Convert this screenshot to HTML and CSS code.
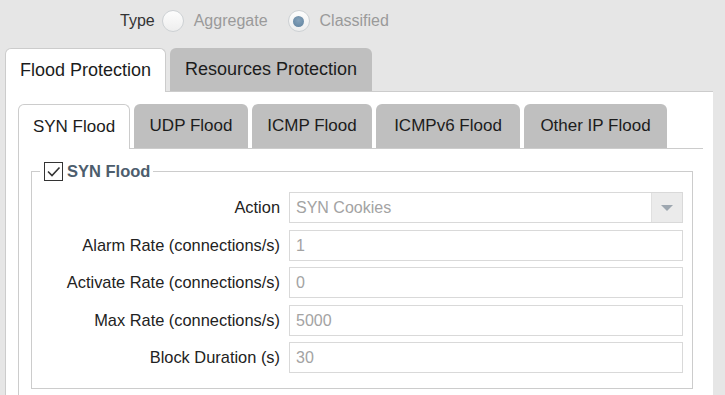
FILE: index.html
```html
<!DOCTYPE html>
<html lang="en">
<head>
    <meta charset="UTF-8">
    <title>Flood Protection</title>
    <link rel="stylesheet" href="styles.css">
</head>
<body>
    <div class="type-row">
        <span class="type-label">Type</span>
        <span class="radio"></span>
        <span class="radio-text">Aggregate</span>
        <span class="radio checked"></span>
        <span class="radio-text">Classified</span>
    </div>

    <div class="outer-tabs">
        <div class="otab otab-flood active">Flood Protection</div>
        <div class="otab otab-res">Resources Protection</div>
    </div>
    <div class="outer-panel">
        <div class="inner-tabs">
            <div class="itab itab-syn active">SYN Flood</div>
            <div class="itab itab-udp">UDP Flood</div>
            <div class="itab itab-icmp">ICMP Flood</div>
            <div class="itab itab-icmp6">ICMPv6 Flood</div>
            <div class="itab itab-other">Other IP Flood</div>
        </div>
        <div class="inner-panel">
            <fieldset class="group">
                <legend>
                    <span class="check">
                        <svg width="15" height="15" viewBox="0 0 15 15"><path d="M2 7.5 L6 11.5 L13.5 3.5" fill="none" stroke="#333" stroke-width="1.6"/></svg>
                    </span>
                    <span class="legend-text">SYN Flood</span>
                </legend>
                <div class="form">
                    <label>Action</label>
                    <div class="select">
                        <span class="value">SYN Cookies</span>
                        <span class="arrow"></span>
                    </div>
                    <label>Alarm Rate (connections/s)</label>
                    <div class="input">1</div>
                    <label>Activate Rate (connections/s)</label>
                    <div class="input">0</div>
                    <label>Max Rate (connections/s)</label>
                    <div class="input">5000</div>
                    <label>Block Duration (s)</label>
                    <div class="input">30</div>
                </div>
            </fieldset>
        </div>
    </div>
</body>
</html>
```

FILE: styles.css
```css
body{
    margin: 0;
    background: #e6e6e6;
    font-family: "Liberation Sans", Arial, sans-serif;
    color: #222;
    overflow: hidden;
}
.type-row{
    display: flex;
    align-items: center;
    height: 42px;
    padding-left: 120px;
    font-size: 16px;
}
.type-label{
    margin-right: 7px;
    color: #333;
}
.radio{
    width: 20px;
    height: 20px;
    border: 1px solid #cdd1d4;
    border-radius: 50%;
    background: linear-gradient(#fdfdfd, #eeeeee);
    margin-right: 10px;
    display: flex;
    align-items: center;
    justify-content: center;
}
.radio.checked:after{
    content: "";
    width: 11px;
    height: 11px;
    border-radius: 50%;
    background: radial-gradient(circle at 50% 40%, #86a3bb, #5f819e);
}
.radio-text{
    color: #9a9a9a;
    margin-right: 20px;
}
.outer-tabs{
    display: flex;
    gap: 4px;
    margin: 6px 0 0 5px;
}
.otab{
    height: 43px;
    line-height: 43px;
    text-align: center;
    font-size: 18px;
    color: #1c1c1c;
    background: #bfbfbf;
    border-radius: 6px 6px 0 0;
    box-sizing: border-box;
}
.otab-flood{ width: 161px; }
.otab-res{ width: 202px; }
.otab.active{
    background: #fff;
    border: 1px solid #cccccc;
    border-bottom: none;
    height: 44px;
    margin-bottom: -1px;
    position: relative;
}
.outer-panel{
    margin-left: 5px;
    width: 708px;
    box-sizing: border-box;
    height: 304px;
    background: #fff;
    border-left: 1px solid #cccccc;
    border-top: 1px solid #cccccc;
    padding: 12px 10px 0 12px;
}
.inner-tabs{
    display: flex;
    gap: 4px;
}
.itab{
    height: 44px;
    line-height: 44px;
    text-align: center;
    font-size: 17px;
    color: #1c1c1c;
    background: #bfbfbf;
    border-radius: 6px 6px 0 0;
    box-sizing: border-box;
}
.itab-syn{ width: 112px; }
.itab-udp{ width: 114px; }
.itab-icmp{ width: 120px; }
.itab-icmp6{ width: 144px; }
.itab-other{ width: 143px; }
.itab.active{
    background: #fff;
    border: 1px solid #cccccc;
    border-bottom: none;
    height: 45px;
    margin-bottom: -1px;
    position: relative;
}
.inner-panel{
    border-left: 1px solid #cccccc;
    border-top: 1px solid #cccccc;
    height: 246px;
    padding: 13px 10px 0 12px;
}
.group{
    margin: 0;
    padding: 0 0 15px 0;
    border: 1px solid #cccccc;
}
.group legend{
    margin-left: 8px;
    padding: 0 3px 0 4px;
    display: flex;
    align-items: center;
    gap: 4px;
}
.check{
    width: 17px;
    height: 17px;
    border: 1.5px solid #333;
    background: #fff;
    display: flex;
    align-items: center;
    justify-content: center;
}
.legend-text{
    font-weight: bold;
    font-size: 16.5px;
    color: #4d5d6d;
}
.form{
    display: grid;
    grid-template-columns: 248px 1fr;
    column-gap: 9px;
    row-gap: 6.5px;
    padding: 11px 9px 0 0;
}
.form label{
    text-align: right;
    font-size: 16.4px;
    line-height: 31px;
    color: #222;
}
.input, .select{
    height: 31px;
    box-sizing: border-box;
    border: 1px solid #d9d9d9;
    background: #fff;
    color: #a3a3a3;
    font-size: 16px;
    line-height: 29px;
    padding-left: 6px;
}
.select{
    display: flex;
    padding-left: 0;
}
.select .value{
    flex: 1;
    padding-left: 6px;
}
.select .arrow{
    width: 30px;
    background: #ebebeb;
    border-left: 1px solid #e0e0e0;
    position: relative;
}
.select .arrow:after{
    content: "";
    position: absolute;
    left: 9px;
    top: 12px;
    border-left: 6px solid transparent;
    border-right: 6px solid transparent;
    border-top: 6px solid #9ea7b0;
}
```
